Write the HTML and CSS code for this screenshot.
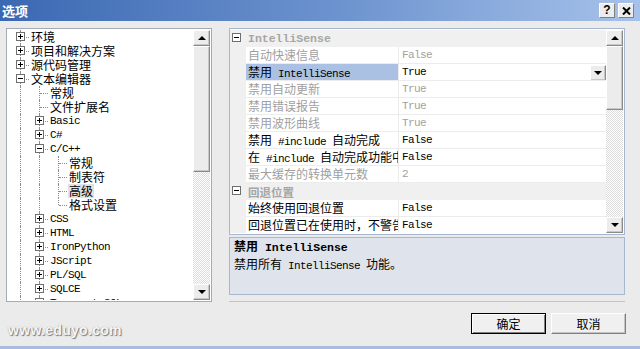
FILE: index.html
```html
<!DOCTYPE html>
<html>
<head>
    <title>选项</title>
    <link rel="stylesheet" href="styles.css">
</head>
<body>
    <div class="dialog">
        <div class="titlebar">
            <span class="title">选项</span>
            <div class="tb-buttons">
                <span class="tb-btn help">?</span>
                <span class="tb-btn">
                    <svg width="9" height="8" viewBox="0 0 9 8"><path d="M1 0.5 L8 7.5 M8 0.5 L1 7.5" stroke="#000" stroke-width="2"/></svg>
                </span>
            </div>
        </div>

        <div class="main">
            <div class="tree">
                <div class="tree-items">
                    <div class="row"><i class="tee"><b class="box plus"></b></i><span class="lbl">环境</span></div>
                    <div class="row"><i class="tee"><b class="box plus"></b></i><span class="lbl">项目和解决方案</span></div>
                    <div class="row"><i class="tee"><b class="box plus"></b></i><span class="lbl">源代码管理</span></div>
                    <div class="row"><i class="tee"><b class="box minus"></b></i><span class="lbl">文本编辑器</span></div>
                    <div class="row"><i class="ln"></i><i class="tee"></i><span class="lbl">常规</span></div>
                    <div class="row"><i class="ln"></i><i class="tee"></i><span class="lbl">文件扩展名</span></div>
                    <div class="row"><i class="ln"></i><i class="tee"><b class="box plus"></b></i><span class="lbl m">Basic</span></div>
                    <div class="row"><i class="ln"></i><i class="tee"><b class="box plus"></b></i><span class="lbl m">C#</span></div>
                    <div class="row"><i class="ln"></i><i class="tee"><b class="box minus"></b></i><span class="lbl m">C/C++</span></div>
                    <div class="row"><i class="ln"></i><i class="ln"></i><i class="tee"></i><span class="lbl">常规</span></div>
                    <div class="row"><i class="ln"></i><i class="ln"></i><i class="tee"></i><span class="lbl">制表符</span></div>
                    <div class="row"><i class="ln"></i><i class="ln"></i><i class="tee"></i><span class="lbl sel">高级</span></div>
                    <div class="row"><i class="ln"></i><i class="ln"></i><i class="end"></i><span class="lbl">格式设置</span></div>
                    <div class="row"><i class="ln"></i><i class="tee"><b class="box plus"></b></i><span class="lbl m">CSS</span></div>
                    <div class="row"><i class="ln"></i><i class="tee"><b class="box plus"></b></i><span class="lbl m">HTML</span></div>
                    <div class="row"><i class="ln"></i><i class="tee"><b class="box plus"></b></i><span class="lbl m">IronPython</span></div>
                    <div class="row"><i class="ln"></i><i class="tee"><b class="box plus"></b></i><span class="lbl m">JScript</span></div>
                    <div class="row"><i class="ln"></i><i class="tee"><b class="box plus"></b></i><span class="lbl m">PL/SQL</span></div>
                    <div class="row"><i class="ln"></i><i class="tee"><b class="box plus"></b></i><span class="lbl m">SQLCE</span></div>
                    <div class="row"><i class="ln"></i><i class="tee"><b class="box plus"></b></i><span class="lbl m">Transact-SQL</span></div>
                </div>
                <div class="vscroll">
                    <span class="sbtn"><span class="tri up"></span></span>
                    <span class="thumb tree-thumb"></span>
                    <span class="track"></span>
                    <span class="sbtn"><span class="tri down"></span></span>
                </div>
            </div>

            <div class="right">
                <div class="grid">
                    <div class="grid-rows">
                        <div class="cat"><b class="box minus"></b><span class="cat-name">IntelliSense</span></div>
                        <div class="prop dis"><span class="pn">自动快速信息</span><span class="pv m">False</span></div>
                        <div class="prop active"><span class="pn">禁用<span class="m"> IntelliSense</span></span><span class="pv"><span class="m">True</span><span class="dd"><span class="tri down"></span></span></span></div>
                        <div class="prop dis"><span class="pn">禁用自动更新</span><span class="pv m">True</span></div>
                        <div class="prop dis"><span class="pn">禁用错误报告</span><span class="pv m">True</span></div>
                        <div class="prop dis"><span class="pn">禁用波形曲线</span><span class="pv m">True</span></div>
                        <div class="prop"><span class="pn">禁用<span class="m"> #include </span>自动完成</span><span class="pv m">False</span></div>
                        <div class="prop"><span class="pn">在<span class="m"> #include </span>自动完成功能中启用</span><span class="pv m">False</span></div>
                        <div class="prop dis"><span class="pn">最大缓存的转换单元数</span><span class="pv m">2</span></div>
                        <div class="cat"><b class="box minus"></b><span class="cat-name">回退位置</span></div>
                        <div class="prop"><span class="pn">始终使用回退位置</span><span class="pv m">False</span></div>
                        <div class="prop"><span class="pn">回退位置已在使用时，不警告</span><span class="pv m">False</span></div>
                    </div>
                    <div class="vscroll">
                        <span class="sbtn"><span class="tri up"></span></span>
                        <span class="thumb grid-thumb"></span>
                        <span class="track"></span>
                        <span class="sbtn"><span class="tri down"></span></span>
                    </div>
                </div>
                <div class="desc">
                    <div class="desc-title">禁用<span class="mb"> IntelliSense</span></div>
                    <div class="desc-text">禁用所有<span class="m"> IntelliSense </span>功能。</div>
                </div>
            </div>
        </div>

        <div class="footer">
            <span class="watermark">www.eduyo.com</span>
            <div class="buttons">
                <button class="btn default">确定</button>
                <button class="btn">取消</button>
            </div>
        </div>
    </div>
</body>
</html>
```

FILE: styles.css
```css
body {
    margin: 0;
    font-family: "Noto Sans CJK SC", sans-serif;
    font-size: 12px;
    color: #000;
    background: #ebebeb;
}

.dialog {
    width: 640px;
    height: 349px;
    box-sizing: border-box;
    border-bottom: 3px solid #a8bcdb;
    background: #ebebeb;
    overflow: hidden;
}

.m {
    font-family: "Liberation Mono", monospace;
    font-size: 11px;
    letter-spacing: -0.6px;
}

.mb {
    font-family: "Liberation Mono", monospace;
    font-size: 11.5px;
    font-weight: bold;
}

/* title bar */
.titlebar {
    height: 21px;
    display: flex;
    align-items: center;
    justify-content: space-between;
    background: linear-gradient(to right, #3a68b2, #6f95d0 55%, #a7c2ea);
}

.title {
    color: #fff;
    font-weight: bold;
    font-size: 13px;
    padding-left: 2px;
    line-height: 21px;
}

.tb-buttons {
    display: flex;
    gap: 3px;
    padding-right: 6px;
}

.tb-btn {
    width: 14px;
    height: 13px;
    display: flex;
    align-items: center;
    justify-content: center;
    background: #ececec;
    border: 1px solid;
    border-color: #fff #808080 #808080 #fff;
    font-family: "Liberation Sans", sans-serif;
    font-weight: bold;
    font-size: 12px;
    line-height: 13px;
}

/* main area */
.main {
    display: flex;
    padding: 7px 0 0 6px;
    gap: 17px;
}

.tree {
    width: 206px;
    height: 274px;
    box-sizing: border-box;
    border: 1px solid #a3abb6;
    background: #fff;
    display: flex;
    padding: 1px 1px 1px 0;
}

.tree-items {
    flex: 1;
    overflow: hidden;
    padding-left: 4px;
}

.row {
    display: flex;
    align-items: center;
    height: 14px;
}

.row i {
    flex: none;
    width: 19px;
    height: 14px;
    position: relative;
}

.ln::before,
.tee::before,
.end::before {
    content: "";
    position: absolute;
    left: 9px;
    top: 0;
    height: 14px;
    border-left: 1px dotted #8c8c8c;
}

.end::before {
    height: 7px;
}

.tee::after,
.end::after {
    content: "";
    position: absolute;
    left: 10px;
    top: 7px;
    width: 8px;
    border-top: 1px dotted #8c8c8c;
}

.box {
    position: absolute;
    left: 5px;
    top: 2px;
    width: 7px;
    height: 7px;
    border: 1px solid #6f6f6f;
    background-color: #fff;
    z-index: 1;
    background-repeat: no-repeat;
    background-position: center;
}

.box.plus {
    background-image: linear-gradient(#000, #000), linear-gradient(#000, #000);
    background-size: 5px 1px, 1px 5px;
}

.box.minus {
    background-image: linear-gradient(#000, #000);
    background-size: 5px 1px;
}

.lbl {
    padding: 0 1px;
    line-height: 14px;
    white-space: nowrap;
}

.lbl.sel {
    background: #e2e2e2;
}

/* scrollbars */
.vscroll {
    width: 17px;
    flex: none;
    display: flex;
    flex-direction: column;
    background: repeating-conic-gradient(#fff 0 25%, #dcdcdc 0 50%) 0 0 / 2px 2px;
}

.sbtn,
.thumb,
.dd {
    box-sizing: border-box;
    background: #ececec;
    border: 1px solid;
    border-color: #fff #8a8a8a #8a8a8a #fff;
    box-shadow: inset -1px -1px 0 #c8c8c8;
}

.sbtn {
    height: 16px;
    display: flex;
    align-items: center;
    justify-content: center;
    flex: none;
}

.tree-thumb {
    height: 126px;
}

.grid-thumb {
    height: 64px;
}

.track {
    flex: 1;
}

.tri {
    width: 0;
    height: 0;
    border-left: 4px solid transparent;
    border-right: 4px solid transparent;
}

.tri.up {
    border-bottom: 4px solid #000;
}

.tri.down {
    border-top: 4px solid #000;
}

/* right side */
.right {
    width: 396px;
    height: 274px;
    box-sizing: border-box;
    border-bottom: 1px solid #bcc6d6;
    display: flex;
    flex-direction: column;
    gap: 2px;
}

.grid {
    height: 207px;
    box-sizing: border-box;
    border: 1px solid #a7b7d0;
    background: #fff;
    display: flex;
    padding: 1px 1px 1px 0;
}

.grid-rows {
    flex: 1;
    overflow: hidden;
}

.cat {
    height: 17px;
    display: flex;
    align-items: center;
    background: #f0f0f0;
    position: relative;
}

.cat .box {
    left: 2px;
    top: 3px;
}

.cat-name {
    padding-left: 18px;
    color: #a6a6a6;
    font-weight: bold;
    font-family: "Liberation Mono", "Noto Sans CJK SC", monospace;
    font-size: 11.5px;
}

.prop {
    height: 17px;
    display: flex;
    background: linear-gradient(to right, #f0f0f0 16px, #fff 16px);
    padding-left: 16px;
}

.pn,
.pv {
    box-sizing: border-box;
    height: 17px;
    line-height: 16px;
    border-bottom: 1px solid #ececec;
    white-space: nowrap;
    overflow: hidden;
}

.pn {
    width: 153px;
    padding-left: 2px;
    border-right: 1px solid #ececec;
}

.pv {
    flex: 1;
    padding-left: 3px;
    display: flex;
    align-items: center;
    justify-content: space-between;
}

.prop.dis {
    color: #9f9f9f;
}

.prop.active .pn {
    background: #aac1e3;
}

.dd {
    width: 16px;
    height: 16px;
    display: flex;
    align-items: center;
    justify-content: center;
    margin-top: 1px;
}

.desc {
    height: 58px;
    box-sizing: border-box;
    border: 1px solid #a7b7d0;
    background: #dfe3eb;
    padding: 0 4px;
}

.desc-title {
    font-weight: bold;
    line-height: 16px;
}

.desc-text {
    line-height: 16px;
}

/* footer */
.footer {
    display: flex;
    justify-content: space-between;
    padding: 11px 14px 0 8px;
}

.watermark {
    font-family: "Liberation Sans", sans-serif;
    font-weight: bold;
    font-size: 14px;
    color: #f6f6f6;
    text-shadow: 1px 1px 1px #7a7a7a, 0 0 1px #9a9a9a;
    padding-top: 9px;
    letter-spacing: 0.3px;
}

.buttons {
    display: flex;
    gap: 5px;
}

.btn {
    width: 75px;
    height: 21px;
    font-family: "Noto Sans CJK SC", sans-serif;
    font-size: 12px;
    background: #f0f0f0;
    border: 1px solid;
    border-color: #fff #808080 #808080 #fff;
    box-shadow: inset -1px -1px 0 #c4c4c4;
    padding: 0;
}

.btn.default {
    border: 1px solid #000;
    box-shadow: inset 1px 1px 0 #fff, inset -1px -1px 0 #808080;
}
```
